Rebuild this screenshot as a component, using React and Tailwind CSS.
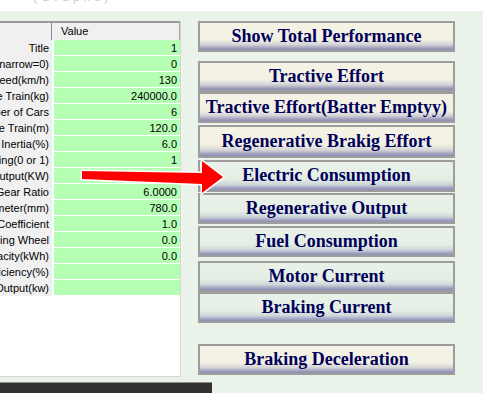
import React from "react";

const rows = [
  ["Title", "1"],
  ["Gauge(wide=1,narrow=0)", "0"],
  ["Max Speed(km/h)", "130"],
  ["Mass of the Train(kg)", "240000.0"],
  ["Number of Cars", "6"],
  ["Length of the Train(m)", "120.0"],
  ["Rotational Inertia(%)", "6.0"],
  ["Regenerative Braking(0 or 1)", "1"],
  ["Auxiliary Output(KW)", ""],
  ["Gear Ratio", "6.0000"],
  ["Wheel Diameter(mm)", "780.0"],
  ["Adhesion Coefficient", "1.0"],
  ["Number of Driving Wheel", "0.0"],
  ["Battery Capacity(kWh)", "0.0"],
  ["Motor Efficiency(%)", ""],
  ["Engine Output(kw)", ""],
];

const cream =
  "bg-[linear-gradient(to_bottom,#f5f3e5_0%,#f1f0e3_62%,#d4d3d6_80%,#9c9bbb_94%,#8d8cb0_100%)]";
const green =
  "bg-[linear-gradient(to_bottom,#e9f2e8_0%,#e4eee4_62%,#cfd6da_80%,#9c9fbf_94%,#8d8eb2_100%)]";

const buttons = [
  { label: "Show Total Performance", cls: "mt-0 h-[31px]", bg: cream },
  { label: "Tractive Effort", cls: "mt-[9px] h-[31px]", bg: cream },
  { label: "Tractive Effort(Batter Emptyy)", cls: "mt-0 h-[31px]", bg: cream },
  { label: "Regenerative Brakig Effort", cls: "mt-[2px] h-[33px]", bg: cream },
  { label: "Electric Consumption", cls: "mt-[2px] h-[32px]", bg: green },
  { label: "Regenerative Output", cls: "mt-px h-[31px]", bg: green },
  { label: "Fuel Consumption", cls: "mt-[2px] h-[31px]", bg: green },
  { label: "Motor Current", cls: "mt-[4px] h-[31px]", bg: green },
  { label: "Braking Current", cls: "mt-0 h-[31px]", bg: green },
  { label: "Braking Deceleration", cls: "mt-[21px] h-[31px]", bg: cream },
];

const ParamTable = () => (
  <div className="w-[181px] h-[356px] bg-white border-r border-b border-[#d6d6d6] font-['Liberation_Sans',Arial,sans-serif] text-[11px] text-black overflow-hidden">
    <div className="flex h-[19px] border-t-2 border-[#9a9a9a] bg-[#f0f0f0] border-r border-r-[#a0a0a0]">
      <div className="w-[52px] border-r border-[#8a8a8a]" />
      <div className="flex-1 pl-[9px] leading-[17px]">Value</div>
    </div>
    {rows.map(([label, value]) => (
      <div key={label} className="flex h-4">
        <div className="w-[52px] bg-[#f0f0f0] flex justify-end pr-[3px] pt-px leading-[15px] whitespace-nowrap overflow-hidden">
          {label}
        </div>
        <div className="ml-[2px] flex-1 bg-[#b4ffb4] border-b border-white text-right pr-[3px] pt-px leading-[14px]">
          {value}
        </div>
      </div>
    ))}
  </div>
);

const Arrow = () => (
  <svg
    className="absolute left-0 top-0 pointer-events-none"
    width="483"
    height="393"
    viewBox="0 0 483 393"
  >
    <path
      d="M82 171 L202 173 L202 161 L223 177 L202 193 L202 184 L82 179 Z"
      fill="#ff0000"
      stroke="#ffffff"
      strokeWidth="3"
      strokeLinejoin="miter"
      paintOrder="stroke"
    />
  </svg>
);

export default function App() {
  return (
    <div className="relative w-[483px] h-[393px] overflow-hidden bg-[#eaf3ea]">
      <div className="h-[11px] bg-white overflow-hidden pl-[33px]">
        <div className="-mt-[12px] text-[12px] text-[#c4c8d6] font-['Liberation_Sans',Arial,sans-serif] tracking-[4px]">
          (Graphs)
        </div>
      </div>
      <div className="flex pt-[10px]">
        <ParamTable />
        <div className="ml-[17px] w-[257px] flex flex-col">
          {buttons.map((b) => (
            <div
              key={b.label}
              className={`${b.cls} ${b.bg} border-2 border-[#9d9d9d] flex items-center justify-center pb-px font-['Liberation_Serif','Times_New_Roman',serif] font-bold text-[18px] text-[#00005a] whitespace-nowrap`}
            >
              {b.label}
            </div>
          ))}
        </div>
      </div>
      <div className="absolute left-0 top-[382px] w-[212px] h-[11px] bg-[#323232] border-t border-[#8c8c8c]" />
      <Arrow />
    </div>
  );
}
